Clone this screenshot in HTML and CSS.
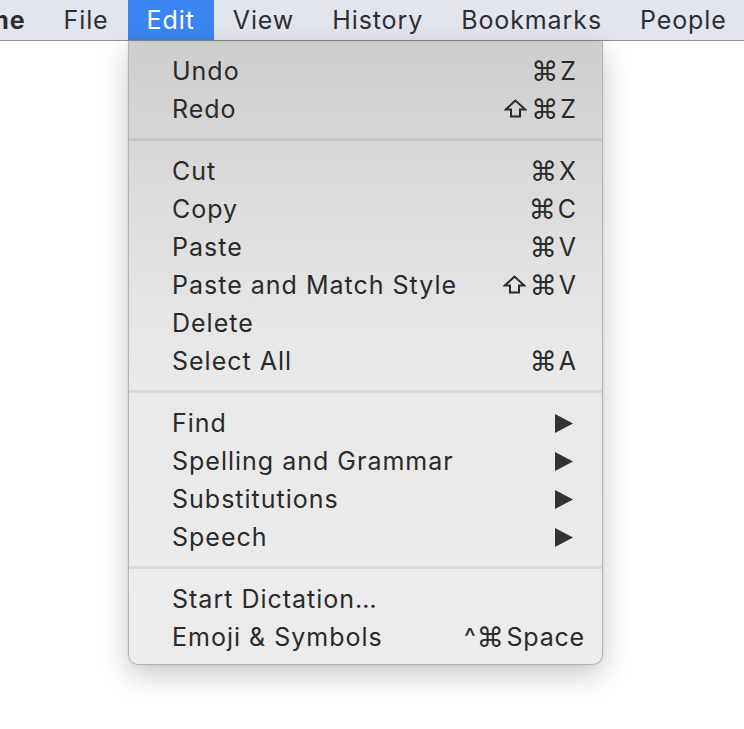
FILE: index.html
```html
<!DOCTYPE html>
<html>
<head>
<meta charset="utf-8">
<link rel="stylesheet" href="styles.css">
</head>
<body>
<div class="menubar">
  <span class="mb-item app">me</span>
  <span class="mb-item">File</span>
  <span class="mb-item active">Edit</span>
  <span class="mb-item">View</span>
  <span class="mb-item">History</span>
  <span class="mb-item">Bookmarks</span>
  <span class="mb-item">People</span>
</div>
<div class="page"></div>
<div class="menu">
  <div class="group">
    <div class="row"><span>Undo</span><span class="sc"><span class="sym">⌘</span>Z</span></div>
    <div class="row"><span>Redo</span><span class="sc"><svg class="shift" width="23" height="19" viewBox="0 0 23 19"><path d="M11.5 1.5 L1.8 10.5 H7 V17.5 H16 V10.5 H21.2 Z" fill="none" stroke="#2a2a2a" stroke-width="2" stroke-linejoin="miter"/></svg><span class="sym">⌘</span>Z</span></div>
  </div>
  <div class="sep"></div>
  <div class="group">
    <div class="row"><span>Cut</span><span class="sc"><span class="sym">⌘</span>X</span></div>
    <div class="row"><span>Copy</span><span class="sc"><span class="sym">⌘</span>C</span></div>
    <div class="row"><span>Paste</span><span class="sc"><span class="sym">⌘</span>V</span></div>
    <div class="row"><span>Paste and Match Style</span><span class="sc"><svg class="shift" width="23" height="19" viewBox="0 0 23 19"><path d="M11.5 1.5 L1.8 10.5 H7 V17.5 H16 V10.5 H21.2 Z" fill="none" stroke="#2a2a2a" stroke-width="2" stroke-linejoin="miter"/></svg><span class="sym">⌘</span>V</span></div>
    <div class="row"><span>Delete</span><span class="sc"></span></div>
    <div class="row"><span>Select All</span><span class="sc"><span class="sym">⌘</span>A</span></div>
  </div>
  <div class="sep"></div>
  <div class="group">
    <div class="row"><span>Find</span><svg class="arrow" width="18" height="19" viewBox="0 0 18 19"><path d="M0 0 L18 9.5 L0 19 Z" fill="#333"/></svg></div>
    <div class="row"><span>Spelling and Grammar</span><svg class="arrow" width="18" height="19" viewBox="0 0 18 19"><path d="M0 0 L18 9.5 L0 19 Z" fill="#333"/></svg></div>
    <div class="row"><span>Substitutions</span><svg class="arrow" width="18" height="19" viewBox="0 0 18 19"><path d="M0 0 L18 9.5 L0 19 Z" fill="#333"/></svg></div>
    <div class="row"><span>Speech</span><svg class="arrow" width="18" height="19" viewBox="0 0 18 19"><path d="M0 0 L18 9.5 L0 19 Z" fill="#333"/></svg></div>
  </div>
  <div class="sep"></div>
  <div class="group">
    <div class="row"><span>Start Dictation…</span><span class="sc"></span></div>
    <div class="row"><span>Emoji &amp; Symbols</span><span class="sc wide">^<span class="sym">⌘</span>Space</span></div>
  </div>
</div>
</body>
</html>
```
FILE: styles.css
```css
html, body {
  margin: 0;
  padding: 0;
  background: #ffffff;
  font-family: Inter, "Helvetica Neue", "Liberation Sans", sans-serif;
}
.menubar {
  height: 40px;
  background: #e3e5ee;
  border-bottom: 1px solid #8d9099;
  display: flex;
  align-items: stretch;
  overflow: hidden;
  white-space: nowrap;
}
.mb-item {
  display: flex;
  align-items: center;
  padding: 0 19px;
  font-size: 25px;
  letter-spacing: 0.9px;
  color: #2d2f34;
}
.mb-item.app {
  padding-left: 0;
  font-weight: 700;
  margin-left: -14px;
}
.mb-item.active {
  background: #3a85f0;
  color: #ffffff;
  padding: 0 19px;
}
.page {
  height: 680px;
}
.menu {
  position: absolute;
  left: 128px;
  top: 41px;
  width: 473px;
  padding: 10px 0 8px;
  background: linear-gradient(#cecece 0%, #dcdcdc 25%, #e8e8e8 50%, #ececec 100%);
  border: 1px solid #b3b3b3;
  border-top: 1px solid #c8c8c8;
  border-radius: 0 0 10px 10px;
  box-shadow: 0 10px 28px rgba(0,0,0,0.22), 0 0 3px rgba(0,0,0,0.08);
  color: #2a2a2a;
  font-size: 25px;
  letter-spacing: 1px;
}
.row {
  height: 38px;
  display: flex;
  align-items: center;
  justify-content: space-between;
  padding: 0 26px 0 43px;
}
.sc {
  display: flex;
  align-items: center;
  letter-spacing: 0;
}
.sym {
  font-family: "DejaVu Sans", sans-serif;
  font-size: 27px;
  margin-right: 2px;
}
.shift {
  margin-right: 4px;
  margin-top: -1px;
}
.sc.wide {
  margin-right: -9px;
  letter-spacing: 0.8px;
}
.arrow {
  margin-right: 3px;
}
.sep {
  height: 3px;
  margin: 10px 0 11px;
  background: rgba(0,0,0,0.07);
}
```
